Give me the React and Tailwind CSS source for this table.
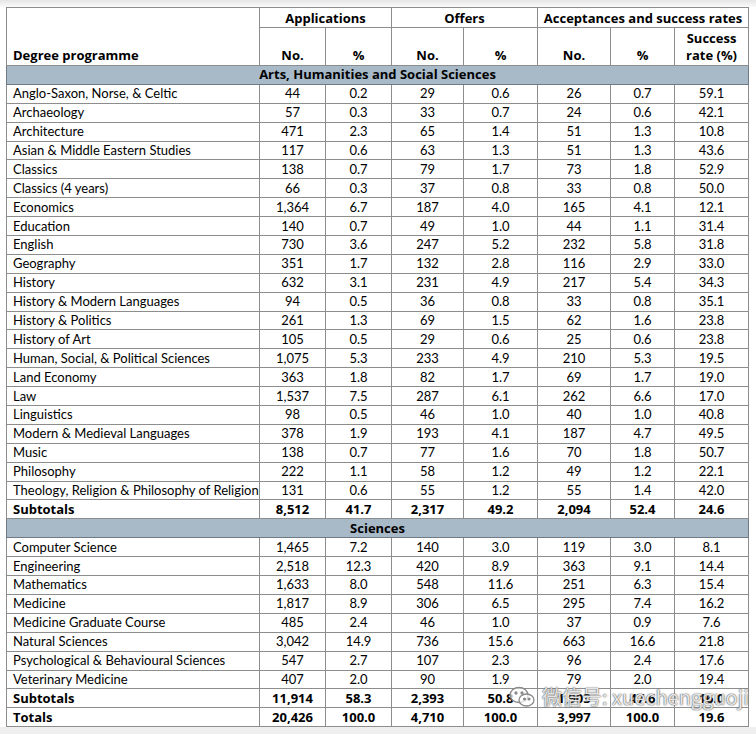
import React from "react";

const arts = [
   ["Anglo-Saxon, Norse, & Celtic", "44", "0.2", "29", "0.6", "26", "0.7", "59.1"],
   ["Archaeology", "57", "0.3", "33", "0.7", "24", "0.6", "42.1"],
   ["Architecture", "471", "2.3", "65", "1.4", "51", "1.3", "10.8"],
   ["Asian & Middle Eastern Studies", "117", "0.6", "63", "1.3", "51", "1.3", "43.6"],
   ["Classics", "138", "0.7", "79", "1.7", "73", "1.8", "52.9"],
   ["Classics (4 years)", "66", "0.3", "37", "0.8", "33", "0.8", "50.0"],
   ["Economics", "1,364", "6.7", "187", "4.0", "165", "4.1", "12.1"],
   ["Education", "140", "0.7", "49", "1.0", "44", "1.1", "31.4"],
   ["English", "730", "3.6", "247", "5.2", "232", "5.8", "31.8"],
   ["Geography", "351", "1.7", "132", "2.8", "116", "2.9", "33.0"],
   ["History", "632", "3.1", "231", "4.9", "217", "5.4", "34.3"],
   ["History & Modern Languages", "94", "0.5", "36", "0.8", "33", "0.8", "35.1"],
   ["History & Politics", "261", "1.3", "69", "1.5", "62", "1.6", "23.8"],
   ["History of Art", "105", "0.5", "29", "0.6", "25", "0.6", "23.8"],
   ["Human, Social, & Political Sciences", "1,075", "5.3", "233", "4.9", "210", "5.3", "19.5"],
   ["Land Economy", "363", "1.8", "82", "1.7", "69", "1.7", "19.0"],
   ["Law", "1,537", "7.5", "287", "6.1", "262", "6.6", "17.0"],
   ["Linguistics", "98", "0.5", "46", "1.0", "40", "1.0", "40.8"],
   ["Modern & Medieval Languages", "378", "1.9", "193", "4.1", "187", "4.7", "49.5"],
   ["Music", "138", "0.7", "77", "1.6", "70", "1.8", "50.7"],
   ["Philosophy", "222", "1.1", "58", "1.2", "49", "1.2", "22.1"],
   ["Theology, Religion & Philosophy of Religion", "131", "0.6", "55", "1.2", "55", "1.4", "42.0"],
];

const sciences = [
   ["Computer Science", "1,465", "7.2", "140", "3.0", "119", "3.0", "8.1"],
   ["Engineering", "2,518", "12.3", "420", "8.9", "363", "9.1", "14.4"],
   ["Mathematics", "1,633", "8.0", "548", "11.6", "251", "6.3", "15.4"],
   ["Medicine", "1,817", "8.9", "306", "6.5", "295", "7.4", "16.2"],
   ["Medicine Graduate Course", "485", "2.4", "46", "1.0", "37", "0.9", "7.6"],
   ["Natural Sciences", "3,042", "14.9", "736", "15.6", "663", "16.6", "21.8"],
   ["Psychological & Behavioural Sciences", "547", "2.7", "107", "2.3", "96", "2.4", "17.6"],
   ["Veterinary Medicine", "407", "2.0", "90", "1.9", "79", "2.0", "19.4"],
];

const cell = "border border-[#8d8d8d] p-0 text-center";
const boldFont = "font-['Open_Sans',sans-serif] font-bold text-[13px]";

function Row({ r, bold }) {
   return (
      <tr className={`h-[18.9px] ${bold ? boldFont : ""}`}>
         <td className="border border-[#8d8d8d] pl-[6px] text-left whitespace-nowrap">{r[0]}</td>
         {r.slice(1).map((v, i) => (
            <td key={i} className={cell}>
               {v}
            </td>
         ))}
      </tr>
   );
}

function Band({ label }) {
   return (
      <tr className={`h-[18.9px] bg-[#a8b9c8] ${boldFont}`}>
         <td colSpan={8} className="border border-[#6f7a84] text-center">
            {label}
         </td>
      </tr>
   );
}

export default function App() {
   return (
      <div className="relative w-[756px] h-[734px] bg-[#efefef] text-black text-[13px] leading-none font-['Lato','Noto_Sans',sans-serif]">
         <div className="h-[7px] bg-gradient-to-b from-[#e6e6e6] to-[#fafafa]" />
         <div className="bg-white w-[756px] h-[720px] pl-[6px]">
            <table className="table-fixed border-collapse w-[742px] border border-[#707070]">
               <colgroup>
                  <col className="w-[253px]" />
                  <col className="w-[66px]" />
                  <col className="w-[66px]" />
                  <col className="w-[72px]" />
                  <col className="w-[74px]" />
                  <col className="w-[73px]" />
                  <col className="w-[64px]" />
                  <col className="w-[74px]" />
               </colgroup>
               <thead className={boldFont}>
                  <tr className="h-[20px]">
                     <th rowSpan={2} className="border border-[#8d8d8d] pl-[6px] pb-[3px] text-left align-bottom">
                        Degree programme
                     </th>
                     <th colSpan={2} className={`${cell} pt-[1px]`}>Applications</th>
                     <th colSpan={2} className={`${cell} pt-[1px]`}>Offers</th>
                     <th colSpan={3} className={`${cell} pt-[1px]`}>Acceptances and success rates</th>
                  </tr>
                  <tr className="h-[38px]">
                     <th className={`${cell} align-bottom pb-[3px]`}>No.</th>
                     <th className={`${cell} align-bottom pb-[3px]`}>%</th>
                     <th className={`${cell} align-bottom pb-[3px]`}>No.</th>
                     <th className={`${cell} align-bottom pb-[3px]`}>%</th>
                     <th className={`${cell} align-bottom pb-[3px]`}>No.</th>
                     <th className={`${cell} align-bottom pb-[3px]`}>%</th>
                     <th className={`${cell} align-bottom pb-[1px] leading-[17px]`}>
                        Success
                        <br />
                        rate (%)
                     </th>
                  </tr>
               </thead>
               <tbody>
                  <Band label="Arts, Humanities and Social Sciences" />
                  {arts.map((r) => (
                     <Row key={r[0]} r={r} />
                  ))}
                  <Row r={["Subtotals", "8,512", "41.7", "2,317", "49.2", "2,094", "52.4", "24.6"]} bold />
                  <Band label="Sciences" />
                  {sciences.map((r) => (
                     <Row key={r[0]} r={r} />
                  ))}
                  <Row r={["Subtotals", "11,914", "58.3", "2,393", "50.8", "1,903", "47.6", "16.0"]} bold />
                  <Row r={["Totals", "20,426", "100.0", "4,710", "100.0", "3,997", "100.0", "19.6"]} bold />
               </tbody>
            </table>
         </div>

         {/* watermark */}
         <div className="absolute left-[508px] top-[684px] flex items-center gap-[6px] text-[20px] leading-[26px] text-white/85 font-['Noto_Sans_CJK_SC',sans-serif] [text-shadow:0_0_1px_#444,0_0_2px_#777]">
            <svg width="28" height="24" viewBox="0 0 28 24" fill="none" stroke="#8a8a8a" strokeWidth="1.3">
               <ellipse cx="11" cy="10" rx="9" ry="7.5" fill="rgba(255,255,255,0.7)" />
               <ellipse cx="18.5" cy="15" rx="7.5" ry="6" fill="rgba(255,255,255,0.7)" />
               <circle cx="8" cy="8" r="1" fill="#8a8a8a" />
               <circle cx="14" cy="8" r="1" fill="#8a8a8a" />
               <circle cx="16.5" cy="14" r="0.9" fill="#8a8a8a" />
               <circle cx="21" cy="14" r="0.9" fill="#8a8a8a" />
            </svg>
            <span>微信号: xuechengguoji</span>
         </div>
      </div>
   );
}
